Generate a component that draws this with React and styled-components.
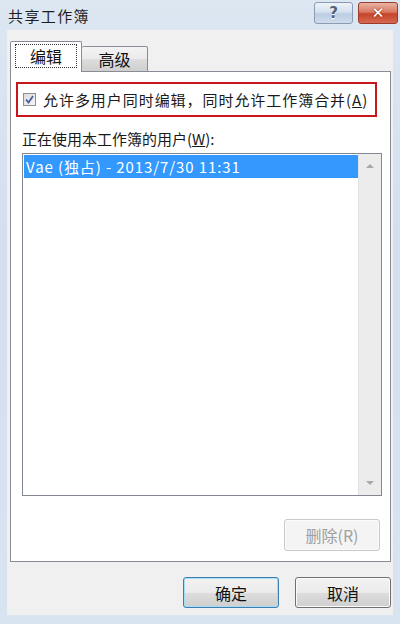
import React from 'react';
import styled, { createGlobalStyle } from 'styled-components';

const GlobalStyle = createGlobalStyle`
  html, body {
    margin: 0;
    padding: 0;
    width: 400px;
    height: 624px;
    overflow: hidden;
    font-family: "Noto Sans CJK SC", "Noto Sans", sans-serif;
  }
`;

const Window = styled.div`
  width: 400px;
  height: 624px;
  display: flex;
  flex-direction: column;
  background: linear-gradient(180deg, #dde7f2 0%, #d3dfee 40%, #d9e4f1 100%);
  box-sizing: border-box;
`;

const TitleBar = styled.div`
  height: 30px;
  flex: none;
  display: flex;
  align-items: center;
  padding-left: 8px;
`;

const Title = styled.div`
  font-size: 15px;
  color: #1e1e1e;
  letter-spacing: 1.4px;
`;

const Controls = styled.div`
  margin-left: auto;
  display: flex;
  align-self: flex-start;
  gap: 5px;
  padding: 2px 2px 0 0;
`;

const CaptionButton = styled.div`
  width: ${p => (p.$close ? 40 : 39)}px;
  height: 22px;
  box-sizing: border-box;
  border-radius: 3px;
  border: 1px solid ${p => (p.$close ? '#9a3b2c' : '#8a9bb3')};
  background: ${p =>
    p.$close
      ? 'linear-gradient(180deg, #eab3a4 0%, #d87a63 45%, #c6442b 55%, #d46b50 100%)'
      : 'linear-gradient(180deg, #eef3f9 0%, #d4e1ef 45%, #bccde3 55%, #cfdcec 100%)'};
  display: flex;
  align-items: center;
  justify-content: center;
  font-family: "DejaVu Sans", sans-serif;
  font-weight: bold;
  font-size: 15px;
  color: ${p => (p.$close ? '#ffffff' : '#51627d')};
  text-shadow: ${p => (p.$close ? '0 0 2px #7a2212' : '0 1px 0 #ffffff')};
`;

const Body = styled.div`
  flex: 1;
  margin: 0 7px 9px 7px;
  background: #f0f0f0;
  display: flex;
  flex-direction: column;
  padding: 12px 0 0 3px;
`;

const TabRow = styled.div`
  display: flex;
  align-items: flex-end;
  height: 30px;
  margin-bottom: -1px;
  position: relative;
  z-index: 1;
`;

const Tab = styled.div`
  box-sizing: border-box;
  height: ${p => (p.$active ? 31 : 26)}px;
  width: ${p => (p.$active ? 72 : 66)}px;
  border: 1px solid #898c95;
  border-bottom: ${p => (p.$active ? 'none' : '1px solid #898c95')};
  border-left: ${p => (p.$active ? '1px solid #898c95' : 'none')};
  border-radius: 2px 2px 0 0;
  background: ${p =>
    p.$active ? '#ffffff' : 'linear-gradient(180deg, #f3f3f3 0%, #ebebeb 50%, #dddddd 51%, #cfcfcf 100%)'};
  display: flex;
  align-items: center;
  justify-content: center;
  font-size: 16px;
  color: #111;
  padding-bottom: ${p => (p.$active ? 2 : 0)}px;
`;

const FocusRing = styled.span`
  border: 1px dotted #333;
  padding: 0 14px;
  line-height: 22px;
`;

const Panel = styled.div`
  width: 381px;
  height: 491px;
  box-sizing: border-box;
  border: 1px solid #898c95;
  background: #ffffff;
  display: flex;
  flex-direction: column;
  padding: 10px 10px 10px 5px;
`;

const Highlight = styled.div`
  width: 361px;
  height: 35px;
  box-sizing: border-box;
  border: 2px solid #c8161d;
  display: flex;
  align-items: center;
  padding-left: 5px;
  gap: 7px;
  font-size: 15px;
  letter-spacing: 0.95px;
  color: #1a1a1a;
`;

const Checkbox = styled.div`
  width: 13px;
  height: 13px;
  box-sizing: border-box;
  border: 1px solid #8e8f8f;
  background: linear-gradient(135deg, #dcdcdc 0%, #f6f6f6 100%);
  display: flex;
  align-items: center;
  justify-content: center;
`;

const Label = styled.div`
  font-size: 15px;
  color: #1a1a1a;
  margin: 12px 0 0 6px;
  line-height: 20px;
`;

const ListBox = styled.div`
  margin: 4px 0 0 6px;
  width: 360px;
  height: 343px;
  box-sizing: border-box;
  border: 1px solid #828790;
  display: flex;
  background: #ffffff;
`;

const Items = styled.div`
  flex: 1;
  padding: 1px 0 0 1px;
`;

const Item = styled.div`
  height: 23px;
  line-height: 23px;
  padding-left: 2px;
  font-size: 15px;
  letter-spacing: 0.9px;
  color: ${p => (p.$selected ? '#ffffff' : '#111')};
  background: ${p => (p.$selected ? '#3399ff' : 'transparent')};
`;

const ScrollBar = styled.div`
  width: 22px;
  background: #ececec;
  border-left: 1px solid #e2e2e2;
  display: flex;
  flex-direction: column;
  justify-content: space-between;
  align-items: center;
  padding: 10px 0 10px;
`;

const Arrow = styled.div`
  width: 0;
  height: 0;
  border-left: 4px solid transparent;
  border-right: 4px solid transparent;
  ${p =>
    p.$down
      ? 'border-top: 4px solid #a9a9a9;'
      : 'border-bottom: 4px solid #a9a9a9;'}
`;

const PanelFooter = styled.div`
  display: flex;
  justify-content: flex-end;
  margin-top: 23px;
`;

const Button = styled.div`
  width: 96px;
  height: ${p => p.$h || 31}px;
  box-sizing: border-box;
  border-radius: 3px;
  border: 1px solid ${p => (p.$disabled ? '#c9c9c9' : p.$focused ? '#3c7fb1' : '#707070')};
  box-shadow: ${p => (p.$focused ? 'inset 0 0 0 1px #a6dcf6' : 'inset 0 0 0 1px #fbfbfb')};
  background: ${p =>
    p.$disabled
      ? '#f4f4f4'
      : 'linear-gradient(180deg, #f2f2f2 0%, #ebebeb 50%, #dddddd 51%, #cfcfcf 100%)'};
  display: flex;
  align-items: center;
  justify-content: center;
  font-size: 16px;
  color: ${p => (p.$disabled ? '#a0a0a0' : '#111')};
`;

const Footer = styled.div`
  display: flex;
  justify-content: flex-end;
  gap: 16px;
  padding: 15px 2px 0 0;
`;

export default function App() {
  return (
    <>
      <GlobalStyle />
      <Window>
        <TitleBar>
          <Title>共享工作簿</Title>
          <Controls>
            <CaptionButton>?</CaptionButton>
            <CaptionButton $close>✕</CaptionButton>
          </Controls>
        </TitleBar>
        <Body>
          <TabRow>
            <Tab $active>
              <FocusRing>编辑</FocusRing>
            </Tab>
            <Tab>高级</Tab>
          </TabRow>
          <Panel>
            <Highlight>
              <Checkbox>
                <svg width="9" height="9" viewBox="0 0 9 9">
                  <path d="M1 4.5 L3.5 7.5 L8 1" fill="none" stroke="#4a5f97" strokeWidth="1.8" />
                </svg>
              </Checkbox>
              <span>
                允许多用户同时编辑，同时允许工作簿合并(<u>A</u>)
              </span>
            </Highlight>
            <Label>
              正在使用本工作簿的用户(<u>W</u>):
            </Label>
            <ListBox>
              <Items>
                <Item $selected>Vae (独占) - 2013/7/30 11:31</Item>
              </Items>
              <ScrollBar>
                <Arrow />
                <Arrow $down />
              </ScrollBar>
            </ListBox>
            <PanelFooter>
              <Button $disabled $h={32}>删除(R)</Button>
            </PanelFooter>
          </Panel>
          <Footer>
            <Button $focused>确定</Button>
            <Button>取消</Button>
          </Footer>
        </Body>
      </Window>
    </>
  );
}
